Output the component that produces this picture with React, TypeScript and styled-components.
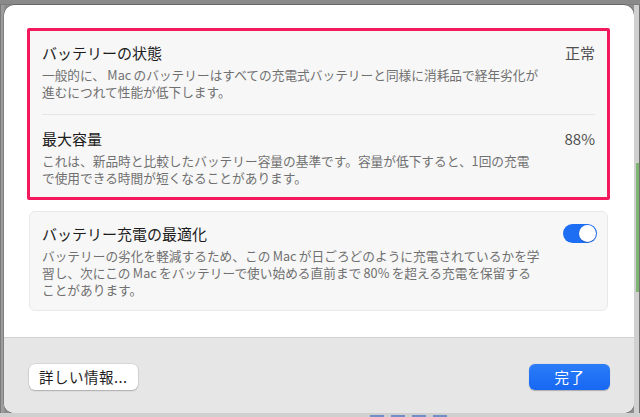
import React from "react";
import styled, { createGlobalStyle } from "styled-components";

const GlobalStyle = createGlobalStyle`
  html, body {
    margin: 0;
    padding: 0;
    background: #8e8e8e;
  }
  body {
    font-family: "Noto Sans CJK JP", "Noto Sans", "Liberation Sans", sans-serif;
    -webkit-font-smoothing: antialiased;
  }
`;

const Page = styled.div`
  width: 640px;
  height: 417px;
  display: flex;
  flex-direction: column;
  overflow: hidden;
  background: #8e8e8e;
`;

const TopStrip = styled.div`
  height: 5px;
  background: #8a8a8a;
  border-bottom: 1px solid #7d7d7d;
  box-sizing: border-box;
`;

const Middle = styled.div`
  display: flex;
  height: 408px;
`;

const LeftStrip = styled.div`
  width: 4px;
  background: #9c9c9c;
  border-left: 1px solid #7a7a7a;
  box-sizing: border-box;
`;

const RightStrip = styled.div`
  flex: 1;
  display: flex;
  flex-direction: column;
  padding-top: 158px;
  background: #d0d0d0;
  border-right: 1px solid #6f6f6f;
`;

const GreenBar = styled.div`
  height: 129px;
  width: 3px;
  margin-left: 2px;
  background: #7fb472;
`;

const BottomStrip = styled.div`
  flex: 1;
  display: flex;
  align-items: flex-end;
  gap: 7px;
  padding-left: 370px;
  background: #cfcfcf;
`;

const Dash = styled.div`
  width: 14px;
  height: 2px;
  background: #6f8fc6;
`;

const Sheet = styled.div`
  width: 630px;
  display: flex;
  flex-direction: column;
  background: #ffffff;
  border-radius: 10px;
  overflow: hidden;
  box-shadow: 0 0 0 0.5px rgba(0, 0, 0, 0.35);
`;

const Content = styled.div`
  flex: 1;
  display: flex;
  flex-direction: column;
  gap: 11px;
  padding: 23px 24px 0 23px;
`;

const Card = styled.div<{ $marked?: boolean }>`
  background: #f7f7f7;
  border: ${(p) => (p.$marked ? "3px solid #f4185c" : "1px solid #e9e9e9")};
  border-radius: ${(p) => (p.$marked ? "2px" : "6px")};
  margin: ${(p) => (p.$marked ? "0" : "0 2px")};
  padding: ${(p) => (p.$marked ? "0 12px" : "12px 10px 12px 12px")};
`;

const Row = styled.div<{ $pt: number; $pb: number }>`
  display: flex;
  justify-content: space-between;
  align-items: flex-start;
  padding: ${(p) => p.$pt}px 0 ${(p) => p.$pb}px;
`;

const Divider = styled.div`
  height: 1px;
  background: #e6e6e6;
`;

const TextCol = styled.div`
  display: flex;
  flex-direction: column;
`;

const Title = styled.div`
  font-size: 15px;
  line-height: 20px;
  font-weight: 400;
  color: #1c1c1c;
  margin-bottom: 3px;
`;

const Desc = styled.div`
  font-size: 12.7px;
  line-height: 17px;
  color: #707070;
  white-space: nowrap;
`;

const Latin = styled.span`
  margin: 0 0.18em;
`;

const Value = styled.div`
  font-size: 15px;
  line-height: 20px;
  color: #505050;
`;

const Toggle = styled.div`
  width: 34px;
  height: 19px;
  border-radius: 10px;
  background: #1e6ef4;
  display: flex;
  align-items: center;
  justify-content: flex-end;
  padding: 0 1px;
  box-sizing: border-box;
`;

const Knob = styled.div`
  width: 17px;
  height: 17px;
  border-radius: 50%;
  background: #ffffff;
  box-shadow: 0 0.5px 1px rgba(0, 0, 0, 0.3);
`;

const Footer = styled.div`
  height: 76px;
  box-sizing: border-box;
  display: flex;
  align-items: center;
  justify-content: space-between;
  padding: 2px 24px 0 25px;
  background: #e6e6e6;
  border-top: 1px solid #d2d2d2;
`;

const Button = styled.button<{ $primary?: boolean }>`
  height: 26px;
  min-width: ${(p) => (p.$primary ? "81px" : "108px")};
  padding: 0 10px;
  border: none;
  border-radius: 6px;
  font-family: inherit;
  font-size: 14.5px;
  letter-spacing: 0.5px;
  color: ${(p) => (p.$primary ? "#ffffff" : "#1e1e1e")};
  background: ${(p) =>
    p.$primary ? "linear-gradient(#2b7df8, #1767f3)" : "#ffffff"};
  box-shadow: ${(p) =>
    p.$primary
      ? "0 0.5px 1px rgba(0, 0, 0, 0.25)"
      : "0 0 0 0.5px rgba(0, 0, 0, 0.12), 0 1px 1.5px rgba(0, 0, 0, 0.2)"};
`;

export default function App() {
  return (
    <Page>
      <GlobalStyle />
      <TopStrip />
      <Middle>
        <LeftStrip />
        <Sheet>
          <Content>
            <Card $marked>
              <Row $pt={12} $pb={14}>
                <TextCol>
                  <Title>バッテリーの状態</Title>
                  <Desc>
                    一般的に、<Latin>Mac</Latin>のバッテリーはすべての充電式バッテリーと同様に消耗品で経年劣化が
                    <br />
                    進むにつれて性能が低下します。
                  </Desc>
                </TextCol>
                <Value>正常</Value>
              </Row>
              <Divider />
              <Row $pt={14} $pb={11}>
                <TextCol>
                  <Title>最大容量</Title>
                  <Desc>
                    これは、新品時と比較したバッテリー容量の基準です。容量が低下すると、1回の充電
                    <br />
                    で使用できる時間が短くなることがあります。
                  </Desc>
                </TextCol>
                <Value>88%</Value>
              </Row>
            </Card>
            <Card>
              <Row $pt={0} $pb={0}>
                <TextCol>
                  <Title>バッテリー充電の最適化</Title>
                  <Desc>
                    バッテリーの劣化を軽減するため、この<Latin>Mac</Latin>が日ごろどのように充電されているかを学
                    <br />
                    習し、次にこの<Latin>Mac</Latin>をバッテリーで使い始める直前まで<Latin>80%</Latin>を超える充電を保留する
                    <br />
                    ことがあります。
                  </Desc>
                </TextCol>
                <Toggle>
                  <Knob />
                </Toggle>
              </Row>
            </Card>
          </Content>
          <Footer>
            <Button>詳しい情報...</Button>
            <Button $primary>完了</Button>
          </Footer>
        </Sheet>
        <RightStrip>
          <GreenBar />
        </RightStrip>
      </Middle>
      <BottomStrip>
        <Dash />
        <Dash />
        <Dash />
        <Dash />
      </BottomStrip>
    </Page>
  );
}
